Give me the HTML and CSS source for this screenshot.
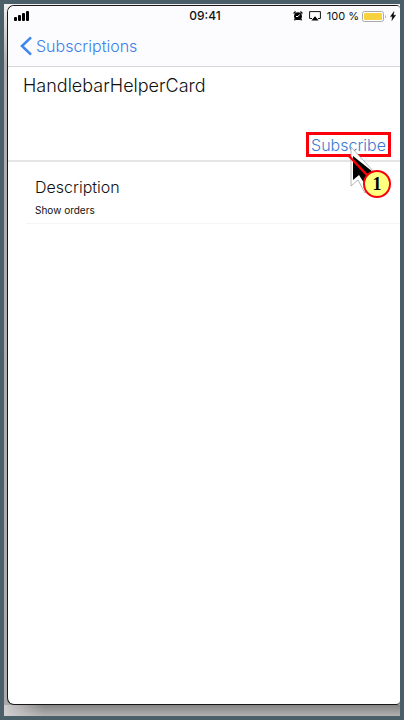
FILE: index.html
```html
<!DOCTYPE html>
<html lang="en">
<head>
<meta charset="utf-8">
<meta name="viewport" content="width=device-width, initial-scale=1">
<title>Subscriptions</title>
<link rel="stylesheet" href="styles.css">
</head>
<body>
<div class="backdrop">
  <div class="phone">
    <header class="top">
      <div class="status">
        <svg class="signal" width="16" height="10" viewBox="0 0 16 10" aria-hidden="true">
          <rect x="0" y="6" width="3" height="4" rx="1"/><rect x="4" y="4" width="3" height="6" rx="1"/><rect x="8" y="2" width="3" height="8" rx="1"/><rect x="12" y="0" width="3" height="10" rx="1"/>
        </svg>
        <time class="clock">09:41</time>
        <div class="indicators">
          <svg width="10" height="10" viewBox="0 0 10 10" aria-hidden="true">
            <circle cx="5" cy="5.2" r="3.9"/><path d="M.6 2.5 2.6.6M9.4 2.5 7.4.6M2.4 8 1.4 9.3M7.6 8l1 1.3" stroke="#111" stroke-width="1.4"/><path d="M5 5.5H3M5 5.5l1.7-2" stroke="#fff" stroke-width="1" fill="none"/>
          </svg>
          <svg class="airplay" width="12" height="10" viewBox="0 0 12 10" aria-hidden="true">
            <path d="M3 7.5H.6V.6h10.8v6.9H9" fill="none" stroke="#111"/><path d="M6 5.2 9.6 9.6H2.4Z"/>
          </svg>
          <span>100 %</span>
          <svg class="battery" width="25" height="11" viewBox="0 0 25 11" aria-hidden="true">
            <rect x=".5" y=".5" width="21" height="10" rx="2" fill="#fff" stroke="#aaa8a8"/><rect x="2" y="2" width="18" height="7" rx="1" fill="#f8d13f"/><path d="M23 3.5q1.6 2 0 4Z" fill="#aaa8a8"/>
          </svg>
          <svg width="6" height="10" viewBox="0 0 6 10" aria-hidden="true"><path d="M4 .5.4 5.6h2L1.8 9.5 5.7 4.2H3.4Z" stroke="#111" stroke-width=".4"/></svg>
        </div>
      </div>
      <nav class="nav">
        <a class="back" href="#">
          <svg width="13" height="20" viewBox="0 0 13 20" aria-hidden="true"><path d="M11 1.4 2 10l9 8.6" fill="none" stroke="#3e86f0" stroke-width="2.6"/></svg>
          <span>Subscriptions</span>
        </a>
      </nav>
    </header>
    <main>
      <section class="card">
        <h1>HandlebarHelperCard</h1>
        <div class="action">
          <button class="subscribe" type="button">Subscribe</button>
          <svg class="pointer" width="48" height="56" viewBox="0 0 48 56" aria-hidden="true">
            <path d="M8 3V42l7-6 7 13 6-3-5-11 9-6Z" fill="#fff" stroke="#999" stroke-width=".7"/>
            <path d="M10 12V36l6-5 7 11 7-14Z" fill="#000"/>
            <path d="M6 12 24 31" stroke="#fb000a" stroke-width="2.5"/>
            <circle cx="34" cy="40" r="13" fill="#ffff80" stroke="#fb000a" stroke-width="2"/>
            <text x="34" y="46" text-anchor="middle">1</text>
          </svg>
        </div>
      </section>
      <section class="details">
        <h2>Description</h2>
        <p>Show orders</p>
      </section>
    </main>
  </div>
</div>
</body>
</html>
```
FILE: styles.css
```css
* { box-sizing: border-box; }
body {
  margin: 0;
  background: #4b5f69;
  color: #111;
  font-family: Inter, "Liberation Sans", sans-serif;
}
.backdrop {
  display: flex;
  min-height: 100vh;
  padding: 1px 0 11px 3px;
  border: 4px solid #4b5f69;
  background:
    linear-gradient(90deg, #d0cecf, transparent 40px) bottom / 100% 11px no-repeat,
    linear-gradient(#858484, #b3b1b2) bottom / 100% 11px no-repeat,
    linear-gradient(#f0f0f0, #b0afb0 60px, #aaa);
}
.phone {
  flex: 1;
  min-width: 0;
  border: 1px solid #171717;
  border-right: 0;
  border-radius: 7px 4px 4px 7px;
  background: #fff;
}
.top {
  border-bottom: 1px solid #d8d8dc;
  border-radius: 6px 4px 0 0;
  background: #fcfcff;
}
.status {
  display: grid;
  grid-template-columns: 1fr auto 1fr;
  align-items: center;
  height: 20px;
  padding: 0 4px 0 6px;
  font-size: 11px;
  line-height: 16px;
}
.clock { font-weight: 500; font-size: 12px; }
.indicators {
  display: flex;
  align-items: center;
  justify-content: flex-end;
  gap: 3px;
  white-space: nowrap;
}
.airplay { margin: 0 3px; }
.nav { display: flex; align-items: center; height: 40px; padding: 0 12px; }
.back {
  display: flex;
  align-items: center;
  gap: 3px;
  color: #3a80e8;
  font-size: 16px;
  font-weight: 300;
  line-height: 20px;
  text-decoration: none;
}
.card {
  display: flex;
  flex-direction: column;
  justify-content: space-between;
  min-height: 95px;
  padding: 8px 9px 3px 15px;
  border-bottom: 2px solid #e5e5e6;
}
h1, h2, p { margin: 0; font-weight: 300; }
h1 { font-size: 18px; line-height: 22px; }
.action { position: relative; align-self: flex-end; }
.subscribe {
  display: block;
  height: 25px;
  padding: 0 2px;
  border: 3px solid #fb000a;
  background: transparent;
  color: #3a7bd0;
  font-family: inherit;
  font-size: 16px;
  font-weight: 300;
  line-height: 20px;
}
.pointer { position: absolute; top: 12px; right: 0; pointer-events: none; }
.pointer text {
  fill: #000;
  font-family: "Liberation Serif", serif;
  font-size: 18px;
  font-weight: 700;
}
.details {
  margin-left: 18px;
  padding: 14px 9px 5px;
  border-bottom: 1px solid #f5f5f5;
}
h2 { font-size: 16px; line-height: 22px; }
p { margin-top: 4px; font-size: 10px; font-weight: 400; line-height: 16px; }
```
